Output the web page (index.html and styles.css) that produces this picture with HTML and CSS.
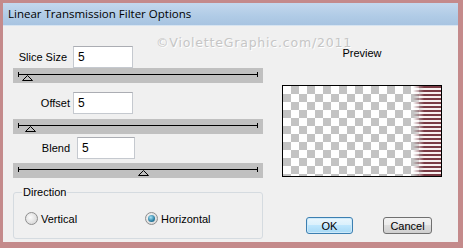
FILE: index.html
```html
<!DOCTYPE html>
<html lang="en">
<head>
    <meta charset="UTF-8">
    <title>Linear Transmission Filter Options</title>
    <link rel="stylesheet" href="styles.css">
</head>
<body>
    <div class="window">
        <div class="titlebar">Linear Transmission Filter Options</div>
        <div class="dialog">
            <div class="watermark">&copy;VioletteGraphic.com/2011</div>
            <div class="controls">
                <div class="row row-slice">
                    <label for="slice">Slice Size</label>
                    <input type="text" id="slice" value="5">
                </div>
                <svg class="slider" width="250" height="15">
                    <rect x="5" y="6" width="240" height="1" fill="#000"/>
                    <rect x="5" y="4" width="1" height="5" fill="#000"/>
                    <rect x="244" y="4" width="1" height="5" fill="#000"/>
                    <polygon points="14.5,7.5 9.5,12.5 19.5,12.5" fill="none" stroke="#000"/>
                </svg>
                <div class="row row-offset">
                    <label for="offset">Offset</label>
                    <input type="text" id="offset" value="5">
                </div>
                <svg class="slider slider-offset" width="250" height="15">
                    <rect x="5" y="6" width="240" height="1" fill="#000"/>
                    <rect x="5" y="4" width="1" height="5" fill="#000"/>
                    <rect x="244" y="4" width="1" height="5" fill="#000"/>
                    <polygon points="17.5,7.5 12.5,12.5 22.5,12.5" fill="none" stroke="#000"/>
                </svg>
                <div class="row row-blend">
                    <label for="blend">Blend</label>
                    <input type="text" id="blend" value="5">
                </div>
                <svg class="slider slider-blend" width="250" height="15">
                    <rect x="5" y="6" width="240" height="1" fill="#000"/>
                    <rect x="5" y="4" width="1" height="5" fill="#000"/>
                    <rect x="244" y="4" width="1" height="5" fill="#000"/>
                    <polygon points="130.5,7.5 125.5,12.5 135.5,12.5" fill="none" stroke="#000"/>
                </svg>
                <fieldset class="direction">
                    <legend>Direction</legend>
                    <div class="choices">
                        <div class="choice choice-vertical">
                            <span class="radio"></span>
                            <span>Vertical</span>
                        </div>
                        <div class="choice">
                            <span class="radio checked"></span>
                            <span>Horizontal</span>
                        </div>
                    </div>
                </fieldset>
            </div>
            <div class="side">
                <div class="preview-title">Preview</div>
                <div class="preview">
                    <div class="strip"></div>
                </div>
                <div class="buttons">
                    <button type="button" class="btn btn-ok">OK</button>
                    <button type="button" class="btn">Cancel</button>
                </div>
            </div>
        </div>
    </div>
</body>
</html>
```

FILE: styles.css
```css
body {
    margin: 0;
    padding: 0;
    background-color: #c48a8b;
    font-family: "Liberation Sans", Arial, sans-serif;
    font-size: 11px;
    color: #000;
}
.window {
    width: 455px;
    height: 239px;
    margin: 3px 0 0 3px;
    display: flex;
    flex-direction: column;
    background-color: #f0f0f0;
}
.titlebar {
    height: 23px;
    line-height: 22px;
    padding-left: 5px;
    font-family: "Open Sans", sans-serif;
    font-size: 11.5px;
    background: linear-gradient(#c4d8ed, #b0cbe6 60%, #a8c4e1);
    border-bottom: 1px solid #d7e4f1;
    box-sizing: border-box;
}
.dialog {
    position: relative;
    flex: 1;
    display: flex;
}
.watermark {
    position: absolute;
    left: 153px;
    top: 9px;
    font-family: "DejaVu Sans", Verdana, sans-serif;
    font-size: 12.5px;
    letter-spacing: 0.8px;
    color: #c6c6c6;
    text-shadow: 1px 1px 0 #fff;
}
.controls {
    width: 250px;
    margin-left: 10px;
    padding-top: 20px;
}
.row {
    display: flex;
    align-items: center;
    height: 22px;
}
.row label {
    width: 54px;
    text-align: right;
}
.row input {
    width: 60px;
    height: 22px;
    margin-left: 6px;
    padding: 0 0 0 4px;
    box-sizing: border-box;
    border: 1px solid #c5c9cf;
    border-top-color: #abadb3;
    background: #fff;
    font-family: "Liberation Sans", Arial, sans-serif;
    font-size: 12px;
    outline: none;
}
.row-offset {
    margin-top: 9px;
}
.row-offset label,
.row-blend label {
    width: 57px;
}
.row-offset input {
    margin-left: 3px;
}
.row-blend {
    margin-top: 3px;
}
.row-blend input {
    margin-left: 7px;
    width: 58px;
}
.slider {
    display: block;
    background-color: #c0c0c0;
}
.slider-offset {
    margin-top: 5px;
}
.slider-blend {
    margin-top: 4px;
}
.direction {
    margin: 8px 0 0 0;
    padding: 0 0 0 11px;
    width: 250px;
    height: 53px;
    box-sizing: border-box;
    border: 1px solid #d5dbe0;
    border-radius: 3px;
}
.direction legend {
    padding: 0 1px;
    margin-left: -3px;
    line-height: 13px;
}
.choices {
    display: flex;
    align-items: center;
    margin-top: 13px;
}
.choice {
    display: flex;
    align-items: center;
    gap: 3px;
}
.choice-vertical {
    width: 120px;
}
.radio {
    width: 13px;
    height: 13px;
    box-sizing: border-box;
    border-radius: 50%;
    border: 1px solid #8f8f8f;
    background: radial-gradient(circle at 40% 40%, #fbfbfb, #dcdcdc 70%, #cfcfcf);
    display: flex;
    align-items: center;
    justify-content: center;
}
.radio.checked::after {
    content: "";
    width: 7px;
    height: 7px;
    border-radius: 50%;
    background: radial-gradient(circle at 40% 35%, #a8e4f8, #2b7fa3 60%, #154e6b);
}
.side {
    margin-left: 19px;
    width: 160px;
    display: flex;
    flex-direction: column;
}
.preview-title {
    margin-top: 21px;
    text-align: center;
    line-height: 13px;
}
.preview {
    margin-top: 25px;
    width: 160px;
    height: 92px;
    box-sizing: border-box;
    border: 1px solid #000;
    background: repeating-conic-gradient(#c3c3c3 0 25%, #fff 0 50%) 0 0 / 16px 16px;
    display: flex;
    justify-content: flex-end;
}
.strip {
    width: 28px;
    background: repeating-linear-gradient(#7a3a44 0 2px, #f7efef 2px 4px);
    -webkit-mask-image: linear-gradient(to right, transparent, #000 40%);
    mask-image: linear-gradient(to right, transparent, #000 40%);
}
.buttons {
    margin-top: 40px;
    margin-left: 24px;
    display: flex;
    gap: 30px;
}
.btn {
    height: 17px;
    padding: 0;
    border: 1px solid #707070;
    border-radius: 3px;
    background: linear-gradient(#f2f2f2, #ebebeb 50%, #dddddd 50%, #cfcfcf);
    font-family: "Liberation Sans", Arial, sans-serif;
    font-size: 11px;
    width: 49px;
    color: #000;
}
.btn-ok {
    width: 47px;
    border-color: #3c7fb1;
    background: linear-gradient(#eaf6fd, #d9f0fc 50%, #bee6fd 50%, #a7d9f5);
    box-shadow: inset 0 0 0 1px #cde9f9;
}
```
